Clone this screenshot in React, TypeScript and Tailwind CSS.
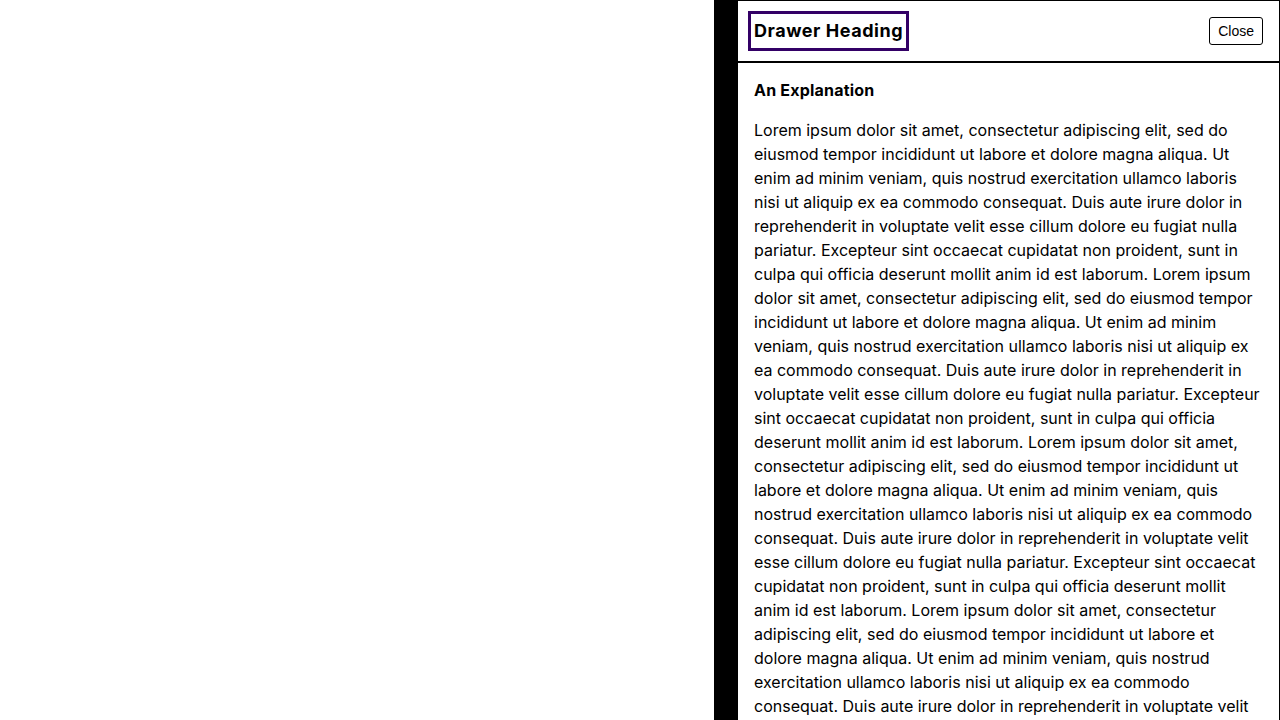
const LOREM =
  'Lorem ipsum dolor sit amet, consectetur adipiscing elit, sed do eiusmod tempor incididunt ut labore et dolore magna aliqua. Ut enim ad minim veniam, quis nostrud exercitation ullamco laboris nisi ut aliquip ex ea commodo consequat. Duis aute irure dolor in reprehenderit in voluptate velit esse cillum dolore eu fugiat nulla pariatur. Excepteur sint occaecat cupidatat non proident, sunt in culpa qui officia deserunt mollit anim id est laborum.';

export default function App() {
  const text = Array(6).fill(LOREM).join(' ');
  return (
    <div className="h-screen w-full flex justify-end bg-white overflow-hidden">
      <aside className="w-[566px] h-full flex flex-col border-l-[24px] border-l-black border-t border-r border-black bg-white text-black font-['Inter',sans-serif]">
        <header className="flex items-center justify-between pl-[10px] pr-4 h-[62px] border-b-2 border-black shrink-0">
          <h2 className="border-[3px] border-[#330066] px-[3px] py-[3px] text-lg leading-7 font-bold tracking-[0.55px]">
            Drawer Heading
          </h2>
          <button className="border border-black rounded-[3px] px-2 h-7 text-sm font-['Liberation_Sans',Arial,sans-serif] bg-white">
            Close
          </button>
        </header>
        <div className="px-4 pt-[15px] overflow-hidden">
          <h3 className="text-base leading-6 font-bold mb-4 tracking-[0.2px]">An Explanation</h3>
          <p className="text-base leading-6">{text}</p>
        </div>
      </aside>
    </div>
  );
}
